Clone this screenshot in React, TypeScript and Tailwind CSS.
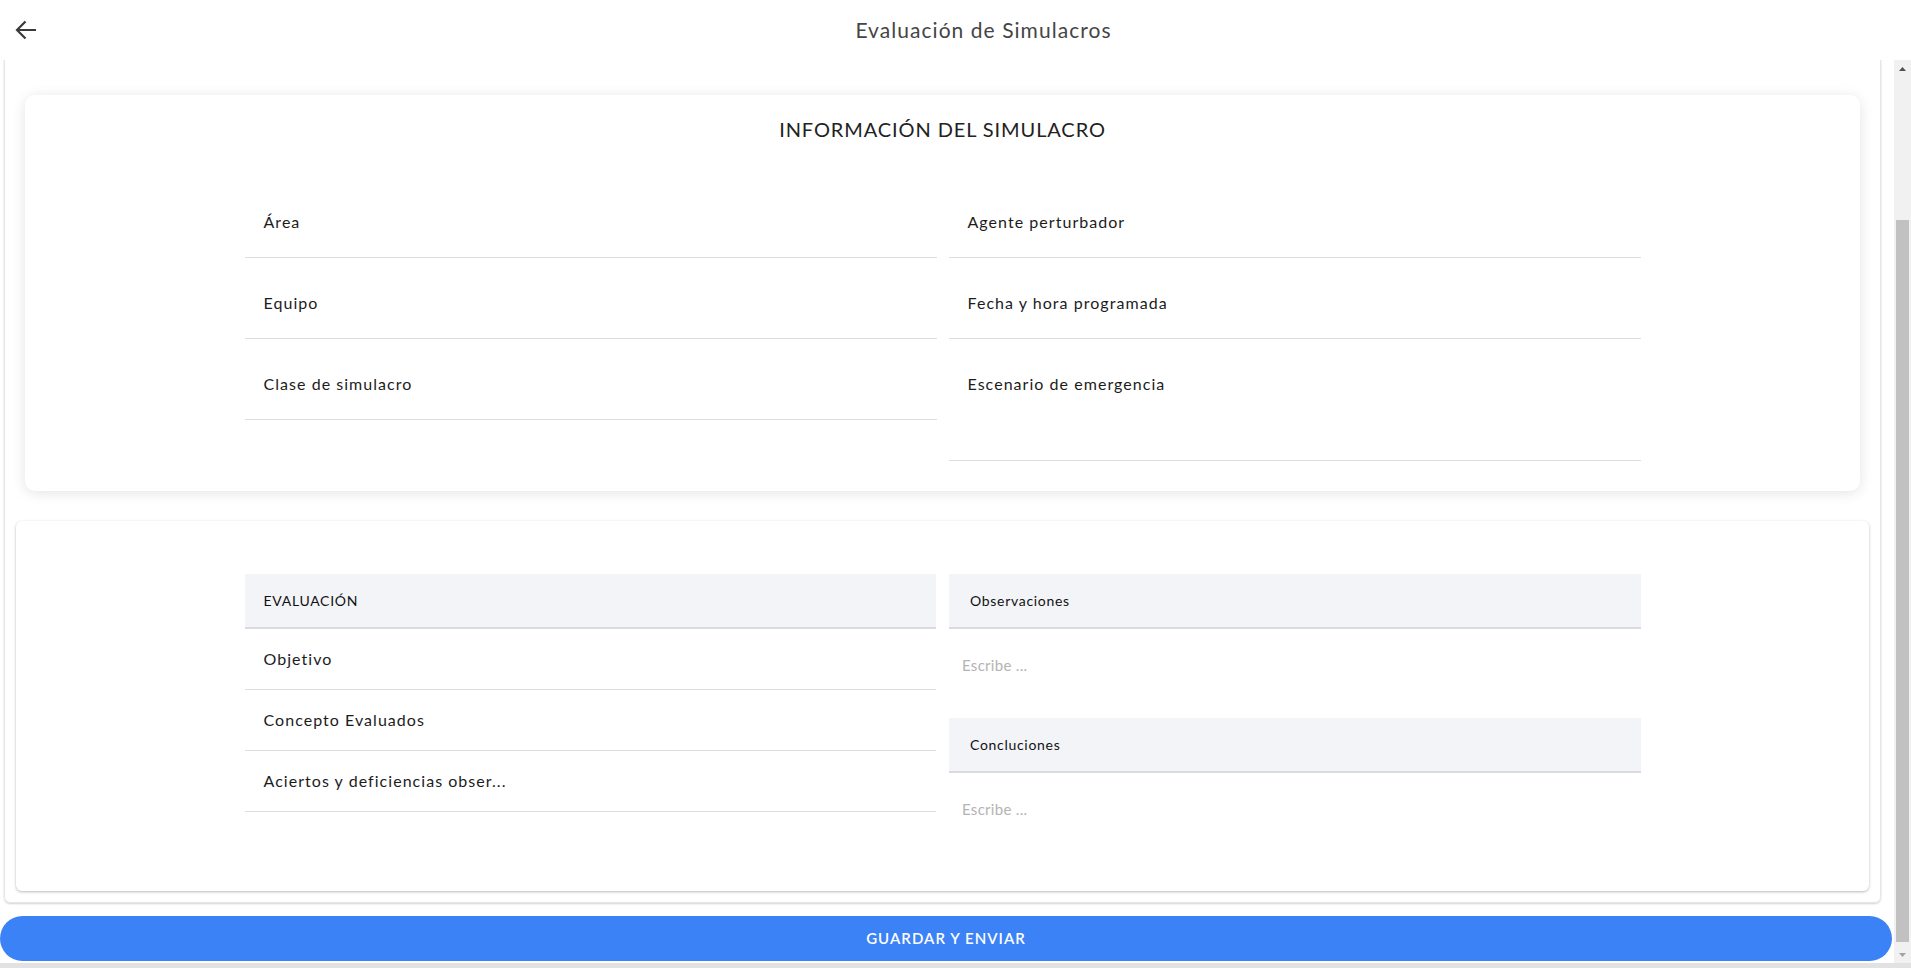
import { useEffect, useRef } from "react";

function InfoField({ label, tall }: { label: string; tall?: boolean }) {
  return (
    <div
      className={`${tall ? "h-[122px]" : "h-[81px]"} border-b border-[#dedede] pl-[19px] pt-[34px] text-[16px] leading-[22px] tracking-[0.065em] text-[#1c1c1c]`}
    >
      {label}
    </div>
  );
}

function EvalRow({ label }: { label: string }) {
  return (
    <div className="flex h-[61px] items-center border-b border-[#dedede] pl-[19px] text-[16px] tracking-[0.065em] text-[#1c1c1c]">
      {label}
    </div>
  );
}

function SectionHeader({ label, pad }: { label: string; pad: string }) {
  return (
    <div
      className={`flex h-[55px] items-center border-b-2 border-[#dadbe0] bg-[#f3f4f8] ${pad} text-[14px] tracking-[0.05em] text-[#111]`}
    >
      {label}
    </div>
  );
}

function Note() {
  return (
    <textarea
      placeholder="Escribe ..."
      className="block h-[89px] w-full resize-none bg-transparent pl-[13px] pt-[26px] text-[15px] leading-[20px] tracking-[0.02em] text-[#222] outline-none placeholder:text-[#b3b3b3]"
    />
  );
}

function ScrollBar() {
  return (
    <div className="flex w-[17px] shrink-0 flex-col bg-[#f1f1f1]">
      <div className="flex h-[17px] items-center justify-center">
        <svg width="7" height="4" viewBox="0 0 7 4">
          <path d="M0 4L3.5 0L7 4Z" fill="#505050" />
        </svg>
      </div>
      <div className="flex flex-1 flex-col justify-end px-[2px] pb-[4px]">
        <div className="h-[722px] bg-[#c1c1c1]" />
      </div>
      <div className="flex h-[17px] items-center justify-center">
        <svg width="7" height="4" viewBox="0 0 7 4">
          <path d="M0 0L3.5 4L7 0Z" fill="#a3a3a3" />
        </svg>
      </div>
    </div>
  );
}

export default function App() {
  const scrollRef = useRef<HTMLDivElement>(null);

  useEffect(() => {
    const el = scrollRef.current;
    if (el) el.scrollTop = el.scrollHeight;
  }, []);

  return (
    <div className="flex h-screen flex-col overflow-hidden bg-white font-['Lato',sans-serif]">
      <header className="flex h-[60px] shrink-0 items-center bg-white">
        <div className="flex w-[56px] items-center pl-[15px]">
          <svg width="22" height="20" viewBox="0 0 22 20" fill="none">
            <path
              d="M21 10H2.5M10.5 1.5L2 10l8.5 8.5"
              stroke="#3a3a3a"
              strokeWidth="2.2"
            />
          </svg>
        </div>
        <h1 className="flex-1 text-center text-[21px] tracking-[0.05em] text-[#454545]">
          Evaluación de Simulacros
        </h1>
      </header>

      <div className="flex min-h-0 flex-1">
        <div ref={scrollRef} className="min-w-0 flex-1 overflow-hidden">
          <div className="ml-[4px] mr-[13px] rounded-b-[6px] border border-t-0 border-[#e6e6e6] pb-[11px] pt-[216px] shadow-[0_1px_2px_rgba(0,0,0,0.18)]">
            <section className="mx-[20px] rounded-[10px] bg-white pb-[30px] pt-[20px] shadow-[0_2px_14px_rgba(0,0,0,0.11)]">
              <h2 className="text-center text-[20px] leading-[28px] tracking-[0.045em] text-[#222]">
                INFORMACIÓN DEL SIMULACRO
              </h2>
              <div className="mx-auto mt-[34px] grid w-[1396px] grid-cols-2 items-start gap-x-[12px]">
                <div className="flex flex-col">
                  <InfoField label="Área" />
                  <InfoField label="Equipo" />
                  <InfoField label="Clase de simulacro" />
                </div>
                <div className="flex flex-col">
                  <InfoField label="Agente perturbador" />
                  <InfoField label="Fecha y hora programada" />
                  <InfoField label="Escenario de emergencia" tall />
                </div>
              </div>
            </section>

            <section className="mx-[11px] mt-[30px] rounded-[6px] bg-white pb-[29px] pt-[53px] shadow-[0_1px_3px_rgba(0,0,0,0.28)]">
              <div className="mx-auto grid w-[1396px] grid-cols-2 items-start gap-x-[13px]">
                <div className="flex flex-col">
                  <SectionHeader label="EVALUACIÓN" pad="pl-[19px]" />
                  <EvalRow label="Objetivo" />
                  <EvalRow label="Concepto Evaluados" />
                  <EvalRow label="Aciertos y deficiencias obser..." />
                </div>
                <div className="flex flex-col">
                  <SectionHeader label="Observaciones" pad="pl-[21px]" />
                  <Note />
                  <SectionHeader label="Concluciones" pad="pl-[21px]" />
                  <Note />
                </div>
              </div>
            </section>
          </div>

          <div className="pb-[2px] pr-[2px] pt-[13px]">
            <button className="h-[45px] w-full rounded-full bg-[#3b82f6] text-[15px] font-semibold tracking-[0.07em] text-white">
              GUARDAR Y ENVIAR
            </button>
          </div>
        </div>
        <ScrollBar />
      </div>

      <div className="h-[5px] shrink-0 bg-[#e2e2e2]" />
    </div>
  );
}
